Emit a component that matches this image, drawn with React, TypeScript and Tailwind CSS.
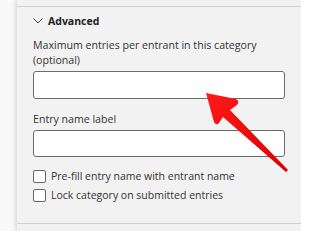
export default function App() {
  return (
    <div className="relative flex h-[231px] w-[301px] overflow-hidden bg-[#f9f9f9] font-['Open_Sans',sans-serif] text-[#333]">
      <div className="w-[17px] shrink-0" />
      <div className="flex flex-1 flex-col bg-[#f2f2f2] shadow-[-2px_0_4px_rgba(0,0,0,0.12)]">
        <div className="h-[7px] border-b border-[#d0d0d0]" />
        {/* Advanced section */}
        <div className="flex flex-col px-[16px] pb-[21px] pt-[6px] border-b border-[#d0d0d0]">
          <div className="flex items-center gap-[5px] h-[16px]">
            <svg width="10" height="6" viewBox="0 0 10 6" className="text-[#444]">
              <path d="M0.5 0.5 L5 5 L9.5 0.5" fill="none" stroke="currentColor" strokeWidth="1" />
            </svg>
            <span className="text-[10.5px] font-bold leading-none text-[#222]">Advanced</span>
          </div>
          <label className="mt-[9px] text-[10.6px] leading-[15px]">
            Maximum entries per entrant in this category (optional)
          </label>
          <input className="mt-[3px] h-[28px] w-full rounded-[3px] border border-[#6b6b6b] bg-white" />
          <label className="mt-[13px] text-[10.6px] leading-[15px]">Entry name label</label>
          <input className="mt-[3px] h-[27px] w-full rounded-[3px] border border-[#6b6b6b] bg-white" />
          <div className="mt-[13px] flex flex-col gap-[6px]">
            <div className="flex items-center gap-[5px] h-[13px]">
              <span className="h-[13px] w-[13px] rounded-[2px] border border-[#666] bg-white" />
              <span className="text-[10.5px] leading-none">Pre-fill entry name with entrant name</span>
            </div>
            <div className="flex items-center gap-[5px] h-[13px]">
              <span className="h-[13px] w-[13px] rounded-[2px] border border-[#666] bg-white" />
              <span className="text-[10.5px] leading-none">Lock category on submitted entries</span>
            </div>
          </div>
        </div>
      </div>
      <svg className="absolute left-0 top-0" width="301" height="231" viewBox="0 0 301 231">
        <defs>
          <linearGradient id="ar" x1="0" y1="0" x2="1" y2="1">
            <stop offset="0" stopColor="#ff1a1a" />
            <stop offset="1" stopColor="#d90000" />
          </linearGradient>
        </defs>
        <path
          d="M206 93 L236 99 Q240 101 237 105 L230 110 L288 170 L286 172 L223 117 L219 123 Q216 126 214 122 Z"
          fill="url(#ar)"
        />
      </svg>
    </div>
  );
}
